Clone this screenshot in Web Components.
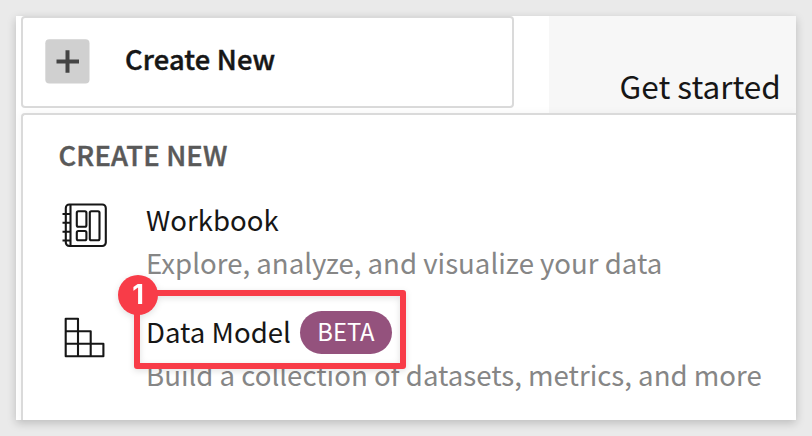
<!DOCTYPE html>
<html lang="en">
<head>
<meta charset="utf-8">
<title>Create New</title>
<style>
html,body{margin:0;height:100%;overflow:hidden;background:#eaeaea}
body{font-family:"Noto Sans CJK SC","Noto Sans",sans-serif;color:#161616}
</style>
</head>
<body>
<app-window>
  <create-button slot="top">Create New</create-button>
  <side-title slot="top">Get started</side-title>
  <create-menu heading="CREATE NEW">
    <menu-entry icon="workbook"><span>Workbook</span><span slot="description">Explore, analyze, and visualize your data</span></menu-entry>
    <menu-entry icon="model"><span>Data Model</span><beta-pill slot="badge">BETA</beta-pill><step-callout slot="callout">1</step-callout><span slot="description">Build a collection of datasets, metrics, and more</span></menu-entry>
  </create-menu>
</app-window>
<script>
const define = (name, html) => customElements.define(name, class extends HTMLElement {
  constructor() {
    super();
    this.attachShadow({ mode: 'open' }).innerHTML = typeof html === 'function' ? html(this) : html;
  }
});

define('app-window', `<style>
:host{display:block;box-sizing:border-box;width:812px;height:436px;padding:16px}
.card{display:flex;flex-direction:column;height:404px;background:#fff;box-shadow:0 3px 9px rgba(0,0,0,.2)}
.top{display:flex;justify-content:space-between;height:97px;padding-left:5px;flex:none}
</style><div class="card"><div class="top"><slot name="top"></slot></div><slot></slot></div>`);

define('create-button', `<style>
:host{display:flex;align-items:flex-start;box-sizing:border-box;width:493px;height:92px;border:2px solid #dadada;border-radius:4px;padding:20px 0 0 22px;background:#fff;font-size:27.3px;font-weight:500;line-height:40px;letter-spacing:.15px;-webkit-text-stroke:.45px #161616;white-space:nowrap}
i{width:45px;height:45px;margin:1px 35px 0 0}
svg{display:block}
</style><i><svg width="45" height="45"><rect x=".3" y=".3" width="44.2" height="44.2" rx="4" fill="#d0d0d0"/><path d="M11.5 22.5H34M22.5 11.3V33.7" stroke="#444" stroke-width="4"/></svg></i><span><slot></slot></span>`);

define('side-title', `<style>
:host{display:block;box-sizing:border-box;width:247px;padding:49px 0 0 70.6px;background:#f7f7f7;font-size:31.5px;line-height:40px;white-space:nowrap}
</style><slot></slot>`);

define('create-menu', el => `<style>
:host{display:block;box-sizing:border-box;flex:1;margin-left:5px;border:solid #dadada;border-width:2px 0 0 2px;border-top-left-radius:4px;padding:19px 0 0 35.5px;background:#fff;box-shadow:0 0 8px rgba(0,0,0,.05);clip-path:inset(-10px 0 0 -5px)}
h2{margin:0;height:41px;font-size:27.3px;font-weight:500;line-height:40px;letter-spacing:.2px;color:#595959;-webkit-text-stroke:.45px #595959;white-space:nowrap}
</style><h2>${el.getAttribute('heading')}</h2><slot></slot>`);

const icons = {
  workbook: `<svg width="48" height="48" fill="none" stroke="#161616" stroke-width="2.1"><rect x="6.8" y="3.5" width="40" height="41.5" rx="3.5"/><path d="M11.5 3.5V45M3.5 13H11.5M3.5 21.8H11.5M3.5 30.8H11.5M3.5 39.5H11.5"/><rect x="17.8" y="10.2" width="9.6" height="15.6" rx="1.5"/><rect x="17.8" y="30" width="9.6" height="9.3" rx="1.5"/><rect x="30.8" y="10.2" width="9.7" height="29.1" rx="1.5"/></svg>`,
  model: `<svg width="48" height="48" fill="none" stroke="#161616" stroke-width="2.1" stroke-linejoin="round"><path d="M6.7 5.8H19V18.2H31.7V30.7H44.4V43.2H6.7ZM6.7 18.2H19V43.2M6.7 30.7H31.7V43.2"/></svg>`
};
define('menu-entry', el => `<style>
:host{display:grid;grid-template-columns:87.5px auto;height:112px;white-space:nowrap}
.icon{padding-top:25.5px}
svg{display:block}
.text{position:relative;padding-top:24px}
.name{display:flex;gap:9px;font-size:27.6px;line-height:40px;height:43px}
.desc{font-size:27.6px;line-height:40px;color:#868686}
</style><div class="icon">${icons[el.getAttribute('icon')]}</div><div class="text"><div class="name"><slot></slot><slot name="badge"></slot></div><div class="desc"><slot name="description"></slot></div><slot name="callout"></slot></div>`);

define('beta-pill', `<style>
:host{display:block;box-sizing:border-box;width:92px;height:43px;border-radius:22px;background:#94527d;color:#fff;font-size:23.8px;line-height:40px;text-align:center}
</style><slot></slot>`);

define('step-callout', `<style>
:host{position:absolute;box-sizing:border-box;left:-12px;top:3.3px;width:272px;height:79px;border:6px solid #f83c48;border-radius:3px;filter:drop-shadow(0 2px 3px rgba(0,0,0,.12))}
b{position:absolute;left:-22px;top:-21.5px;width:40px;height:40px;border-radius:50%;background:#f83c48;color:#fff;font:700 27px/40px Inter,sans-serif;text-align:center}
</style><b><slot></slot></b>`);
</script>
</body>
</html>
